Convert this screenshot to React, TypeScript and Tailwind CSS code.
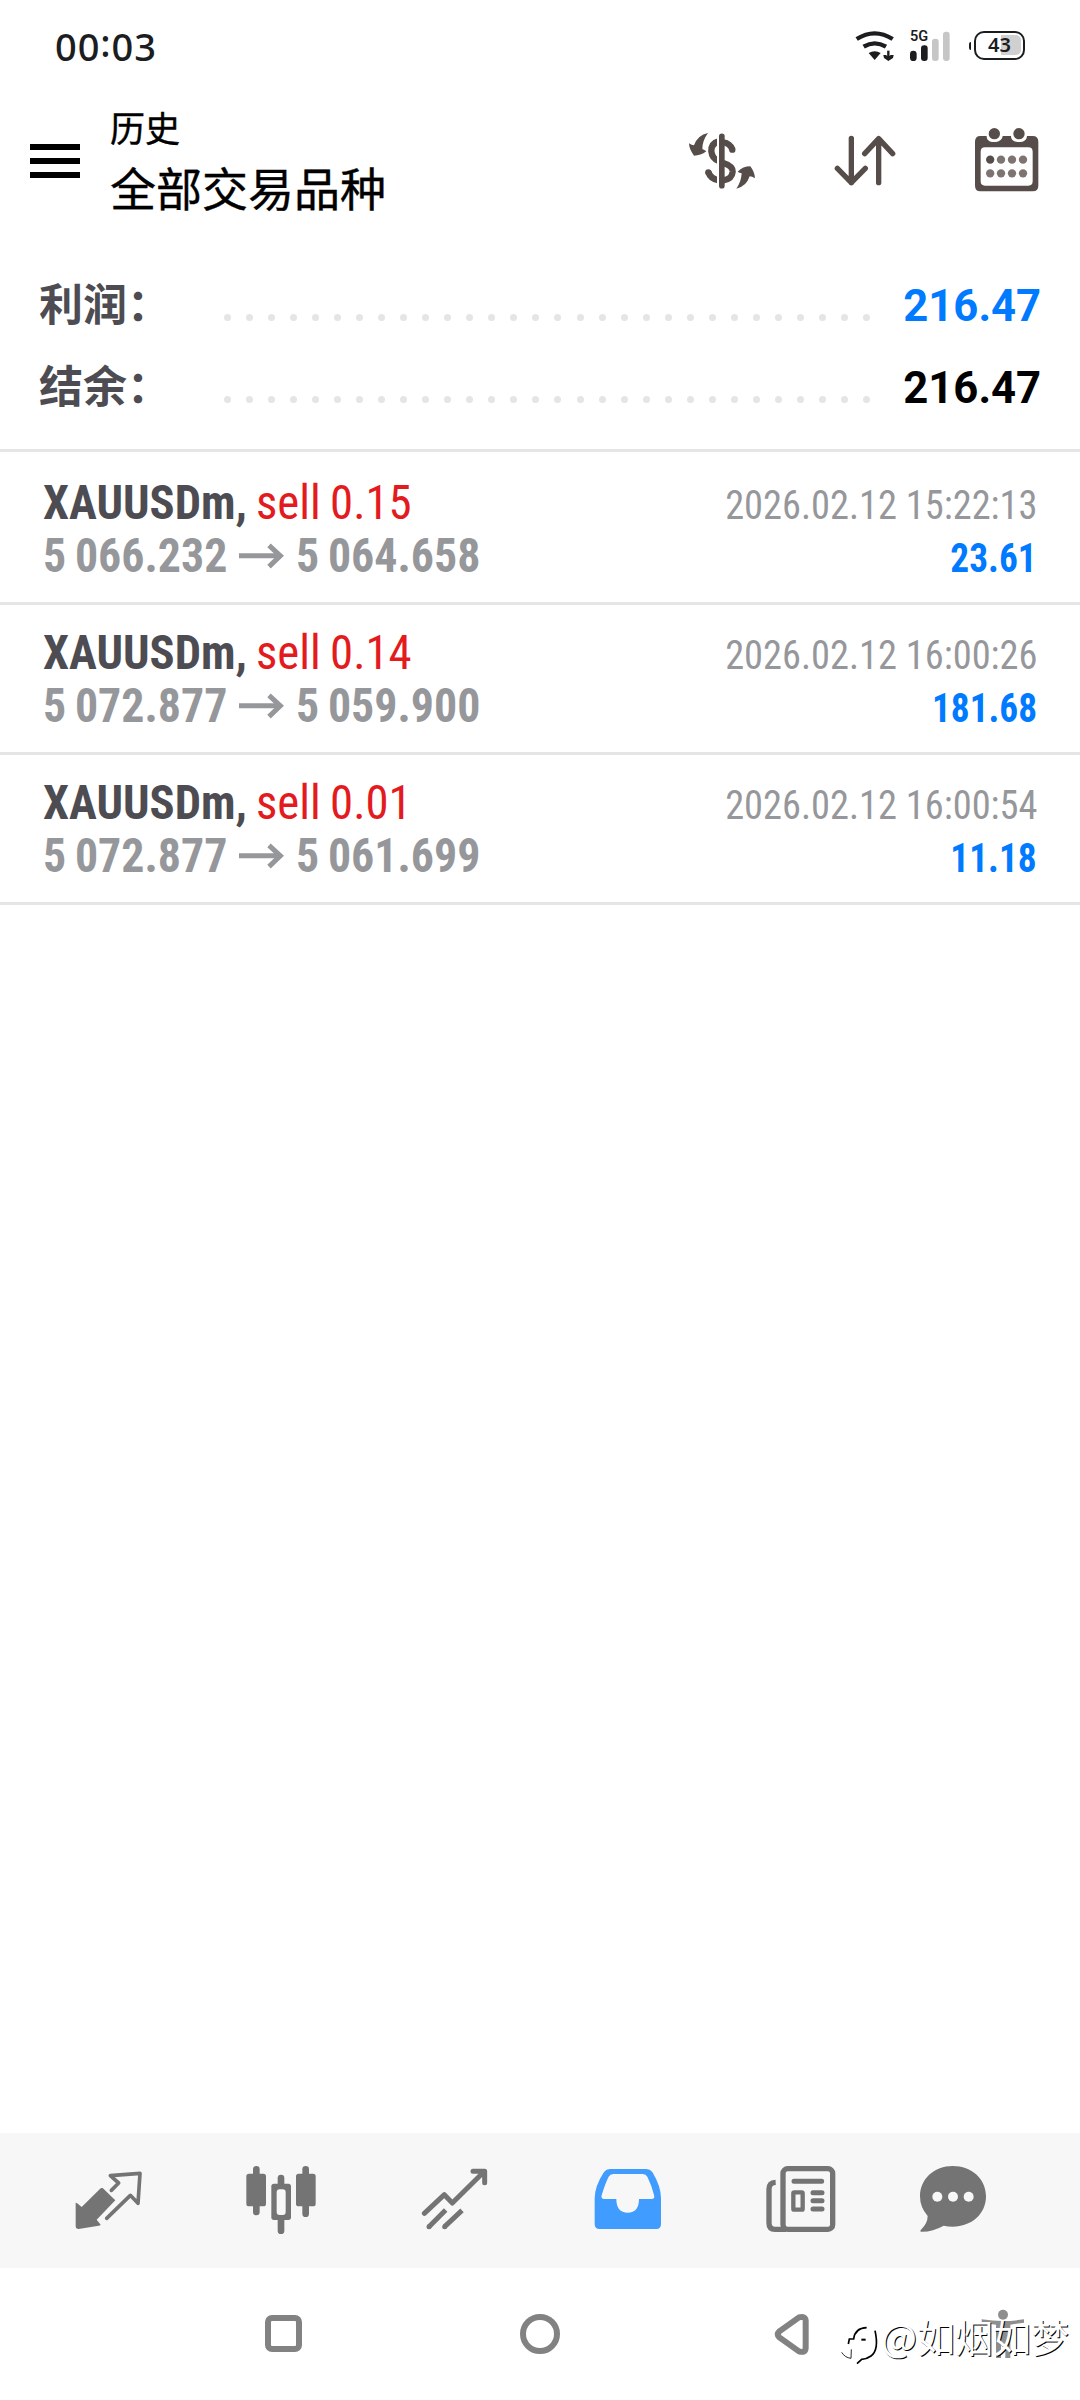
import type { ReactNode } from 'react'

type Deal = { symbol: string; side: string; open: string; close: string; time: string; profit: string }

const deals: Deal[] = [
  { symbol: 'XAUUSDm,', side: 'sell 0.15', open: '5 066.232', close: '5 064.658', time: '2026.02.12 15:22:13', profit: '23.61' },
  { symbol: 'XAUUSDm,', side: 'sell 0.14', open: '5 072.877', close: '5 059.900', time: '2026.02.12 16:00:26', profit: '181.68' },
  { symbol: 'XAUUSDm,', side: 'sell 0.01', open: '5 072.877', close: '5 061.699', time: '2026.02.12 16:00:54', profit: '11.18' },
]

function StatusBar() {
  return (
    <div className="flex h-[90px] items-start justify-between pr-[55px] pl-[55px] text-[#1c1d1f]">
      <div className="mt-[27px] font-['Noto_Sans',sans-serif] text-[38px] leading-[38px] font-medium tracking-[0.9px]">
        00<span className="relative -top-[4px]">:</span>03
      </div>
      <div className="flex items-start">
        <svg className="mt-[30px] h-[32px] w-[40px]" viewBox="588 90 120 96" fill="none">
          <path d="M593 117Q647 83 701 117M614 140Q647 120 681 140" stroke="currentColor" strokeWidth="13" />
          <path d="M629 159Q647 149 665 159L647 180Z" fill="currentColor" />
          <path d="M688 152v22" stroke="currentColor" strokeWidth="7" />
          <path d="M673 165l8 0 7 5 7-5 9 0-2 9-14 9-13-9z" fill="currentColor" />
        </svg>
        <div className="relative mt-[31px] ml-[15px] h-[30px] w-[41px]">
          <svg className="h-[30px] w-[41px]" viewBox="753 91 123 90">
            <rect x="753" y="150" width="20" height="31" rx="10" fill="#1c1d1f" />
            <rect x="786" y="134" width="20" height="47" rx="9" fill="#1c1d1f" />
            <rect x="819" y="114" width="20" height="67" rx="9" fill="#c6c6c6" />
            <rect x="852" y="93" width="20" height="88" rx="9" fill="#c6c6c6" />
          </svg>
          <span className="absolute -top-[1px] left-0 font-[Roboto,sans-serif] text-[14.5px] leading-[14px] font-semibold">5G</span>
        </div>
        <div className="mt-[31px] ml-[18px] flex items-start">
          <div className="mt-[11px] mr-[3px] h-[8px] w-[2px] rounded-l-full bg-[#1c1d1f]" />
          <div className="relative h-[29px] w-[51px] rounded-[10px] border-[2.5px] border-[#1c1d1f] p-[2px]">
            <div className="ml-auto h-[20px] w-[20px] rounded-r-[5px] bg-[#d0d0d0]" />
            <span className="absolute inset-0 text-center font-['Noto_Sans',sans-serif] text-[20px] leading-[23px] font-semibold">43</span>
          </div>
        </div>
      </div>
    </div>
  )
}

function Header() {
  return (
    <header className="flex h-[171px] items-start">
      <div className="mt-[54px] ml-[30px] flex w-[50px] flex-col gap-[8px]">
        <i className="h-[6px] bg-black" />
        <i className="h-[6px] bg-black" />
        <i className="h-[6px] bg-black" />
      </div>
      <div className="mt-[19px] ml-[30px] w-[578px] font-['Noto_Sans_CJK_SC',sans-serif] text-black [-webkit-text-stroke:0.4px_#000]">
        <div className="text-[35px] leading-[35px]">历史</div>
        <div className="mt-[19px] text-[46px] leading-[46px]">全部交易品种</div>
      </div>
      <svg className="mt-[42px] h-[58px] w-[68px]" viewBox="84 396 204 174" fill="none">
        <path d="M144 399Q113 405 102 436Q95 436 87 430Q87 447 102 467Q122 467 139 454Q133 449 127 447Q127 422 144 399Z" fill="#564d4a" />
        <path d="M229 566Q259 560 269 529Q276 529 285 535Q284 516 271 499Q249 499 233 515Q238 518 245 520Q244 545 229 566Z" fill="#564d4a" />
        <path d="M176 424Q153 430 154 454Q156 476 176 483M190 427Q210 430 217 448M190 489Q219 498 218 515Q216 537 190 541M176 541Q151 536 145 516" stroke="#564d4a" strokeWidth="19" />
        <rect x="171" y="405" width="8" height="156" fill="#fff" />
        <path d="M185.500 409V557" stroke="#564d4a" strokeWidth="17" strokeLinecap="round" />
        <circle cx="217" cy="449" r="9.500" fill="#564d4a" />
        <circle cx="145" cy="517" r="9.500" fill="#564d4a" />
      </svg>
      <svg className="mt-[45px] ml-[78px] h-[52px] w-[62px]" viewBox="522 405 186 156" fill="none" stroke="#564d4a" strokeWidth="16" strokeLinecap="round" strokeLinejoin="round">
        <path d="M574 415V548M532 505L574 548L616 505M656 548V416M614 461L656 416L698 461" />
      </svg>
      <svg className="mt-[37px] ml-[78px] h-[65px] w-[65px]" viewBox="942 381 195 195">
        <path fillRule="evenodd" fill="#564d4a" d="M961 408H980C980 420 988 426 1002 426S1026 420 1028 408H1053C1053 420 1062 426 1077 426S1100 420 1101 408H1118Q1135 408 1135 425V557Q1135 574 1118 574H961Q945 574 945 557V425Q945 408 961 408ZM975 442Q962 442 962 455V544Q962 557 975 557H1105Q1118 557 1118 544V455Q1118 442 1105 442Z" />
        <circle cx="1003" cy="401" r="17" fill="#564d4a" />
        <circle cx="1077" cy="401" r="17" fill="#564d4a" />
        <circle cx="990.500" cy="479" r="12.500" fill="#564d4a" />
        <g fill="#7d7471">
          <circle cx="1023" cy="479" r="12.500" />
          <circle cx="1056" cy="479" r="12.500" />
          <circle cx="1089" cy="479" r="12.500" />
          <circle cx="990.500" cy="520" r="12.500" />
          <circle cx="1023" cy="520" r="12.500" />
          <circle cx="1056" cy="520" r="12.500" />
          <circle cx="1089" cy="520" r="12.500" />
        </g>
      </svg>
    </header>
  )
}

function SummaryRow({ label, children }: { label: string; children: ReactNode }) {
  return (
    <div className="flex h-[82px] items-baseline pr-[39px] pl-[39px]">
      <span className="w-[185px] font-['Noto_Sans_CJK_SC',sans-serif] text-[44px] leading-[82px] font-bold text-[#4d4c52]">{label}</span>
      <div className="mb-[1.5px] flex h-[7px] w-[646px] justify-between">
        {Array.from({ length: 30 }, (_, i) => (
          <i key={i} className="size-[7px] rounded-full bg-[#e5e5e5]" />
        ))}
      </div>
      <span className="ml-auto origin-right scale-x-97 font-[Roboto,sans-serif] text-[45px] leading-[52px] font-bold">{children}</span>
    </div>
  )
}

function DealRow({ deal }: { deal: Deal }) {
  return (
    <div className="flex h-[150px] justify-between border-b-[3px] border-[#e5e5e5] pr-[43px] pl-[43px] font-['Roboto_Condensed',sans-serif] whitespace-nowrap">
      <div className="pt-[21px] text-[49px] leading-[53px]">
        <div className="flex">
          <span className="w-[213px] origin-left scale-x-95 font-bold text-[#4d4c52]">{deal.symbol}</span>
          <span className="origin-left scale-x-[0.955] text-[#e31b1e] [word-spacing:-1.5px]">{deal.side}</span>
        </div>
        <div className="flex items-start font-bold text-[#96979b]">
          <span className="w-[196px] origin-left scale-x-[0.937] [word-spacing:-2px]">{deal.open}</span>
          <svg className="mt-[14px] h-[26px] w-[46px]" viewBox="717 302 138 78" fill="none" stroke="#96979b" strokeWidth="15">
            <path d="M717 340.500H840" />
            <path d="M807 309L841 340.500L807 373" />
          </svg>
          <span className="ml-[11px] w-[196px] origin-left scale-x-[0.937] [word-spacing:-2px]">{deal.close}</span>
        </div>
      </div>
      <div className="flex flex-col items-end pt-[24px] text-[40.5px] leading-[53px]">
        <span className="origin-right scale-x-[0.948] text-[#96979b]">{deal.time}</span>
        <span className="origin-right scale-x-[0.922] font-bold text-[#007aff]">{deal.profit}</span>
      </div>
    </div>
  )
}

function TabBar() {
  return (
    <nav className="flex h-[135px] items-start bg-[#f7f7f7] text-[#747474]">
      <svg className="mt-[37px] ml-[74px] h-[60px] w-[69px]" viewBox="222 150 207 180" fill="none">
        <path d="M308 204L346 241L290 299L302 314Q300 317 296 317L236 327Q227 327 227 318V248Q231 248 245 261L302 205Q305 203 308 204Z" fill="currentColor" />
        <path d="M334 211L356 189L331 167L420 160L414 250L391 226L320 295" stroke="currentColor" strokeWidth="11" strokeLinecap="round" strokeLinejoin="round" />
      </svg>
      <svg className="mt-[32px] ml-[102px] h-[70px] w-[72px]" viewBox="735 135 216 210" fill="currentColor">
        <rect x="759" y="138" width="20" height="148" rx="10" />
        <rect x="739" y="161" width="59" height="98" rx="8" />
        <rect x="907" y="138" width="20" height="153" rx="10" />
        <rect x="888" y="161" width="59" height="98" rx="8" />
        <rect x="833" y="164" width="20" height="60" rx="10" />
        <rect x="833" y="280" width="20" height="62" rx="10" />
        <rect x="814" y="191" width="59" height="109" rx="8" />
        <rect x="830" y="208" width="27" height="77" rx="9" fill="#f7f7f7" />
      </svg>
      <svg className="mt-[35px] ml-[104px] h-[62px] w-[68px]" viewBox="182 144 204 186" fill="none" stroke="currentColor" strokeWidth="15" strokeLinecap="round" strokeLinejoin="round">
        <path d="M192 280L252 224L276 249L370 156M338 154H373V188" />
        <path d="M206 320L256 270M253 320L305 271" strokeLinecap="butt" />
        <circle cx="206" cy="320" r="7.500" fill="currentColor" stroke="none" />
        <circle cx="253" cy="320" r="7.500" fill="currentColor" stroke="none" />
      </svg>
      <svg className="mt-[35px] ml-[105px] h-[62px] w-[68px]" viewBox="701 144 204 186">
        <path fillRule="evenodd" fill="#419cff" d="M749 147H858Q869 147 876 156Q902 199 902 235V313Q902 327 888 327H718Q703 327 703 313V235Q703 199 731 156Q738 147 749 147ZM759 162Q749 162 745 170Q735 189 724 226Q721 237 732 237H768Q768 278 802 278T836 237H873Q885 237 881 225Q874 196 861 170Q857 162 847 162Z" />
      </svg>
      <svg className="mt-[32px] ml-[103px] h-[68px] w-[72px]" viewBox="136 135 216 204" fill="none" stroke="currentColor" strokeWidth="16">
        <rect x="190" y="146" width="149" height="182" rx="14" />
        <path d="M200 328H166Q148 328 148 309V207Q148 188 168 187" />
        <g strokeLinecap="round" strokeWidth="15">
          <path d="M223 184H306M280 218H307M280 242H307M280 267H307" />
        </g>
        <rect x="221" y="217" width="28" height="52" rx="3" strokeWidth="13" />
      </svg>
      <svg className="mt-[32px] ml-[82px] h-[68px] w-[68px]" viewBox="597 135 204 204">
        <path fill="currentColor" d="M698 138C755 138 798 176 798 229S755 320 698 320Q684 320 671 317Q637 336 603 335Q598 333 603 329Q623 310 623 288Q600 262 600 229C600 176 643 138 698 138Z" />
        <circle cx="652" cy="230" r="15" fill="#f7f7f7" />
        <circle cx="699" cy="230" r="15" fill="#f7f7f7" />
        <circle cx="746" cy="230" r="15" fill="#f7f7f7" />
      </svg>
    </nav>
  )
}

function SystemNav() {
  return (
    <div className="relative flex h-[132px] items-start text-[#828282]">
      <i className="mt-[47px] ml-[265px] size-[37px] rounded-[7px] border-[6px] border-[#828282]" />
      <i className="mt-[46px] ml-[218px] size-[40px] rounded-full border-[6px] border-[#828282]" />
      <svg className="mt-[44px] ml-[214px] h-[44px] w-[36px]" viewBox="162 576 108 132" fill="none" stroke="currentColor" strokeWidth="18" strokeLinejoin="round">
        <path d="M237 592L178 634Q169 643 178 652L237 694Q256 700 257 684V602Q256 587 237 592Z" />
      </svg>
      <svg className="mt-[41px] ml-[171px] h-[50px] w-[44px]" viewBox="783 567 132 150" fill="#8e8e8e">
        <circle cx="849" cy="584" r="15" />
        <path d="M785 598Q849 608 912 598V608L871 614V714H856V672H843V714H828V614L785 608Z" />
      </svg>
      <div className="absolute top-[49px] left-[841px] flex items-start">
        <svg className="mt-[9px] h-[40px] w-[40px]" viewBox="0 78 120 120" fill="none" stroke="#000" strokeWidth="4">
          <path d="M22 132L25 117H38Q42 84 77 83" strokeWidth="5" />
          <path d="M102 92Q115 150 90 168Q76 178 62 178L48 191" strokeWidth="5" />
          <path d="M61 119H74" strokeWidth="6" />
          <path d="M2 157Q12 173 30 175L31 148" strokeWidth="2.500" />
        </svg>
        <span className="font-['Noto_Sans_CJK_SC',sans-serif] text-[38px] leading-[38px] text-white [text-shadow:1px_1px_0_#000]">@如烟如梦</span>
      </div>
    </div>
  )
}

export default function App() {
  return (
    <div className="flex h-[2400px] w-[1080px] flex-col overflow-hidden bg-white">
      <StatusBar />
      <Header />
      <section className="h-[191px] border-b-[3px] border-[#e5e5e5]">
        <SummaryRow label="利润：">
          <span className="text-[#007aff]">216.47</span>
        </SummaryRow>
        <SummaryRow label="结余：">
          <span className="text-black">216.47</span>
        </SummaryRow>
      </section>
      <main className="flex-1 pt-[3px]">
        {deals.map((d) => (
          <DealRow key={d.time} deal={d} />
        ))}
      </main>
      <TabBar />
      <SystemNav />
    </div>
  )
}
